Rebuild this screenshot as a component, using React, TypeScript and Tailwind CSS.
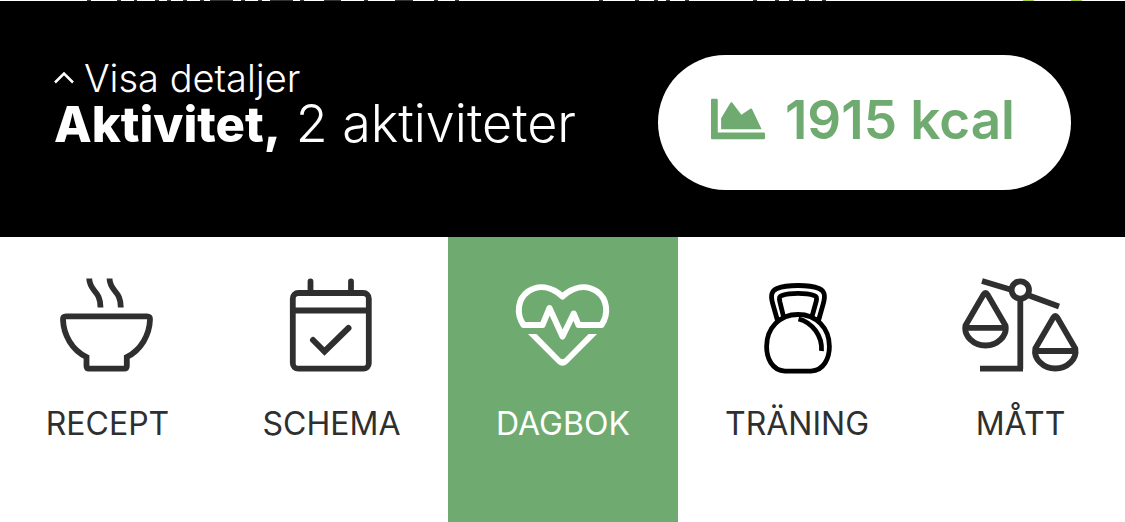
import type { ReactNode } from "react";
import { FaChartArea } from "react-icons/fa";

const darkMarks = [
  [87, 4], [117, 4], [134, 3], [155, 4], [167, 4], [183, 4], [200, 4], [210, 23], [241, 4], [258, 4],
  [270, 23], [300, 4], [324, 17], [364, 4], [395, 18], [434, 4], [455, 4], [599, 4], [635, 4],
  [654, 4], [666, 4], [685, 4], [753, 4], [775, 4], [789, 4], [805, 4], [822, 4],
];

function ContentEdge() {
  return (
    <svg className="block h-px w-full bg-white" viewBox="0 0 1125 1" preserveAspectRatio="none" aria-hidden="true">
      {darkMarks.map(([x, w]) => (
        <rect key={x} x={x} width={w} height="1" fill="#333333" />
      ))}
      <rect x="1023" width="11" height="1" fill="#a9cf4e" />
      <rect x="1071" width="11" height="1" fill="#a9cf4e" />
    </svg>
  );
}

function BowlIcon() {
  return (
    <svg className="h-25 w-25" viewBox="58 276 100 100" fill="none" stroke="currentColor" strokeWidth="5.8" aria-hidden="true">
      <path d="M66 316.3H147Q150.2 316.3 150 319.5C149.5 335 141 350 126.8 357V366Q126.8 368.7 124 368.7H89Q86.5 368.7 86.5 366V357C72 350 63.5 335 63 319.5Q62.8 316.3 66 316.3Z" />
      <path d="M89.2 278.5C89.7 292 100.5 290 100.5 307.5M109.5 278.5C110 292 120.8 290 120.8 307.5" />
    </svg>
  );
}

function CalendarIcon() {
  return (
    <svg className="h-25 w-25" viewBox="282 276 100 100" fill="none" stroke="currentColor" strokeWidth="5.8" aria-hidden="true">
      <rect x="292.8" y="293" width="76" height="75.7" rx="5.5" />
      <path d="M293 310.5H368" />
      <path d="M310.5 281.5V292M351 281.5V292" strokeLinecap="round" />
      <path d="M313 340L324.5 351.5L348.5 328" strokeWidth="6" strokeLinecap="round" />
    </svg>
  );
}

function HeartIcon() {
  return (
    <svg className="h-25 w-25" viewBox="513 276 100 100" fill="none" stroke="currentColor" strokeWidth="6" aria-hidden="true">
      <path d="M523.5 325C516 314 517.5 299 528 291.5C538.5 284.5 551 286 562.5 296.5C574 286 586.5 284.5 597 291.5C607.5 299 609 314 601.5 325H578.5L573.7 313.5L562.5 336.5L549.5 308L542.5 325Z" strokeLinejoin="round" />
      <path d="M528 334H536.5L560.5 358.5Q562.5 360 564.5 358.5L588.5 334H597L567.5 363.5Q562.5 368 557.5 363.5Z" fill="currentColor" stroke="none" />
    </svg>
  );
}

function KettlebellIcon() {
  return (
    <svg className="h-25 w-25 text-black" viewBox="747 276 100 100" fill="none" stroke="currentColor" strokeWidth="4.8" aria-hidden="true">
      <path d="M785 371.2C772 370.5 766.6 358 766.6 346.5C766.6 328 779.5 314.5 798 314.5C816.5 314.5 829.4 328 829.4 346.5C829.4 358 824 370.5 811 371.2Z" />
      <path d="M777.5 320.5L772.5 303C770.5 295 771.5 291 777 288.5C787 284.5 809 284.5 819 288.5C824.5 291 825.5 295 823.5 303L818.5 320.5" />
      <path d="M783.5 316.5L779.8 301.5C779 297 779.5 296.3 782 295.5C790 292.8 806 292.8 814 295.5C816.5 296.3 817 297 816.2 301.5L812 316.5" />
      <path d="M798.5 319C812.5 322.5 822.5 336 821.5 351" />
    </svg>
  );
}

function ScalesIcon() {
  return (
    <svg className="h-25 w-30" viewBox="961 276 120 100" fill="none" stroke="currentColor" strokeWidth="5.8" aria-hidden="true">
      <circle cx="1020.3" cy="290" r="8.7" />
      <path d="M982 281L1012 290M1029 295.5L1059 306.5M1020.3 299V368.7M1023 368.7H980" />
      <path d="M965.5 325.5L983.5 294.5Q985.5 291.5 987.5 294.5L1005.5 325.5C1007.5 336 997.5 345.5 985.5 345.5C973.5 345.5 963.5 336 965.5 325.5ZM965.5 327.8H1005.5" />
      <path d="M1035.3 348.5L1053.3 317.5Q1055.3 314.5 1057.3 317.5L1075.3 348.5C1077.3 359 1067.3 368.5 1055.3 368.5C1043.3 368.5 1033.3 359 1035.3 348.5ZM1035.3 351H1075.3" />
    </svg>
  );
}

function NavItem({ label, icon, active = false }: { label: string; icon: ReactNode; active?: boolean }) {
  return (
    <a
      href="#"
      aria-current={active ? "page" : undefined}
      className={`flex flex-col items-center pt-[39px] pb-20 ${active ? "bg-[#6fab70] text-white" : "text-[#2f2f2f]"}`}
    >
      {icon}
      <span className="mt-7 text-[32px] leading-10">{label}</span>
    </a>
  );
}

export default function App() {
  return (
    <div className="flex min-h-screen flex-col bg-white font-['Inter',sans-serif]">
      <ContentEdge />
      <header className="flex items-start justify-between bg-black pt-[54px] pr-[54px] pb-[47px] pl-[54px] text-white">
        <div>
          <button type="button" className="flex items-center gap-2.5 text-[38px] leading-[46px] font-light">
            <svg className="h-5 w-5" viewBox="0 0 20 20" fill="none" stroke="currentColor" strokeWidth="2.5" aria-hidden="true">
              <path d="M1 14.5L10 5.5L19 14.5" />
            </svg>
            Visa detaljer
          </button>
          <p className="text-[52px] leading-[46px] font-light">
            <strong className="text-[49px] leading-[46px] font-extrabold">Aktivitet,</strong> 2 aktiviteter
          </p>
        </div>
        <button type="button" className="flex h-[135px] items-center gap-5 rounded-full bg-white pr-14 pl-[53px] text-[53px] font-semibold whitespace-nowrap text-[#6fab70]">
          <FaChartArea className="mb-2 h-[54px] w-[54px]" aria-hidden="true" />
          <span className="pb-1">1915 kcal</span>
        </button>
      </header>
      <nav className="grid grow grid-cols-[215fr_233fr_230fr_238fr_209fr]">
        <NavItem label="RECEPT" icon={<BowlIcon />} />
        <NavItem label="SCHEMA" icon={<CalendarIcon />} />
        <NavItem label="DAGBOK" icon={<HeartIcon />} active />
        <NavItem label="TRÄNING" icon={<KettlebellIcon />} />
        <NavItem label="MÅTT" icon={<ScalesIcon />} />
      </nav>
    </div>
  );
}
